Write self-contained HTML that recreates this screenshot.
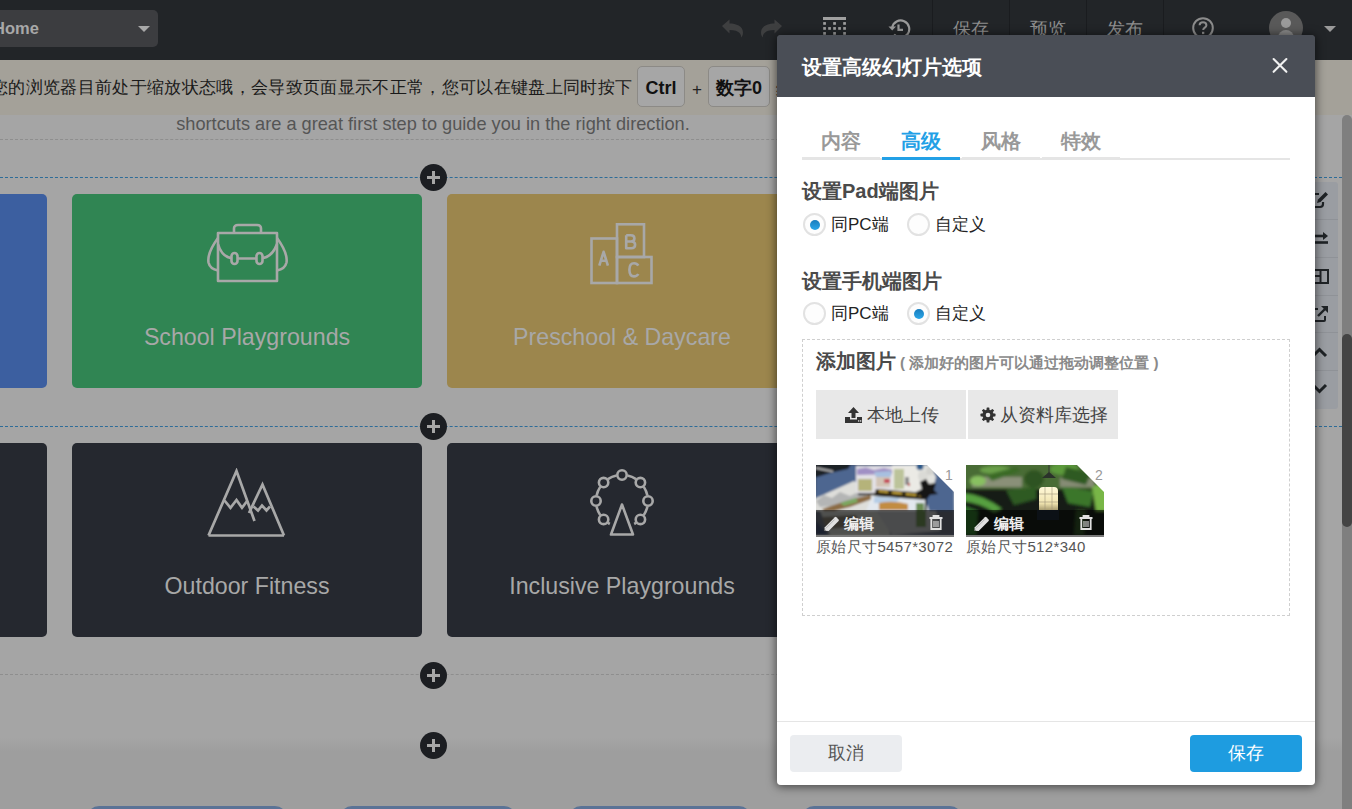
<!DOCTYPE html>
<html><head><meta charset="utf-8">
<style>
*{box-sizing:border-box;margin:0;padding:0}
html,body{width:1352px;height:809px;overflow:hidden}
body{position:relative;background:#a5a5a5;font-family:"Liberation Sans",sans-serif;color:#333}
.abs{position:absolute}
#top{left:0;top:0;width:1352px;height:60px;background:#222528}
#sel{left:-10px;top:10px;width:168px;height:37px;background:#3c3d40;border-radius:5px}
#sel .t{position:absolute;left:3px;top:9px;font-size:16.5px;color:#a8a8a8;font-weight:bold}
#sel .car{position:absolute;left:148px;top:16px;width:0;height:0;border-left:6px solid transparent;border-right:6px solid transparent;border-top:6px solid #a8a8a8}
.tb{top:0;height:60px;width:77px;border-left:1px solid #1a1c1f;color:#8e8e8e;font-size:18px;text-align:center;line-height:58px}
#notice{left:0;top:60px;width:1352px;height:55px;background:#a4a199}
#notice .t{position:absolute;left:-9px;top:18px;font-size:17px;letter-spacing:.33px;color:#1a1a1a;white-space:nowrap;line-height:20px}
.kbd{position:absolute;top:6px;height:41px;border:1px solid #8c8a86;border-radius:5px;background:#a6a6a6;font-weight:bold;font-size:18px;color:#111;text-align:center;line-height:39px;padding-top:2px}
#page{left:0;top:115px;width:1342px;height:695px;overflow:hidden}
#band{left:0;top:738px;width:1342px;height:71px;background:linear-gradient(#a5a5a5 0,#9e9e9e 14px)}
.sub{left:0;width:866px;text-align:center;top:114px;font-size:18.2px;color:#555}
.dash{height:0;border-top:1px dashed #8e8e8e}
.bdash{height:0;border-top:1px dashed #2d6c98}
.card{border-radius:5px}
.card .lbl{position:absolute;left:0;width:100%;text-align:center;font-size:23.2px;color:#a8a8a8}
.plus{width:27px;height:27px;border-radius:50%;background:#1c1e22}
.plus:before{content:"";position:absolute;left:7px;top:12px;width:13px;height:3px;background:#a6a6a6}
.plus:after{content:"";position:absolute;left:12px;top:7px;width:3px;height:13px;background:#a6a6a6}
#scroll{left:1342px;top:115px;width:10px;height:694px;background:#7f7f7f;border-radius:5px 5px 0 0}
#thumb{left:1342px;top:334px;width:10px;height:193px;background:#444;border-radius:5px}
#rtool{left:1290px;top:182px;width:48px;height:227px;background:#9a9da2;border-radius:3px}
.ri{position:absolute;left:0;width:48px;height:1px;background:#8f9297}
#ov-modal{left:777px;top:35px;width:538px;height:750px;background:linear-gradient(#4a4e56 0,#4a4e56 62px,#fff 62px);border-radius:4px;overflow:hidden;box-shadow:0 1px 10px 1px rgba(0,0,0,.55)}
#mhead{left:0;top:0;width:538px;height:62px;background:#4a4e56}
#mhead .t{position:absolute;left:25px;top:21px;font-size:20px;font-weight:bold;color:#fff;line-height:22px}
#close{position:absolute;left:494px;top:21px;width:18px;height:18px}
.tab{position:absolute;top:90px;padding-top:1px;width:78px;height:35px;border-bottom:3px solid #e5e5e5;font-size:20px;font-weight:bold;color:#999;text-align:center;line-height:30px}
.tab.on{color:#22a0e6;border-bottom-color:#22a0e6}
.h{position:absolute;left:25px;font-size:20px;font-weight:bold;color:#4a4a4a;line-height:22px}
.radio{position:absolute;width:23px;height:23px;border-radius:50%;border:2px solid #e2e2e2;background:#fdfdfd}
.radio.on:after{content:"";position:absolute;left:4.5px;top:4.5px;width:10px;height:10px;border-radius:50%;background:linear-gradient(180deg,#1a7dbd,#2aa6e8)}
.rl{position:absolute;font-size:17px;color:#222;line-height:20px}

.btn{position:absolute;width:150px;height:49px;background:#e8e8e8;font-size:18px;color:#444;line-height:22px}
.thumb{position:absolute;width:138px;height:90px}
.thumb .img1,.thumb .img2{position:absolute;left:0;top:0;width:138px;height:70px;overflow:hidden}
.img1{background:linear-gradient(160deg,#2a2f3a 0%,#56657f 25%,#7d8aa0 40%,#c9c9c0 55%,#e6e4dc 70%,#6a7590 100%)}
.img2{background:radial-gradient(ellipse 12px 16px at 74px 38px,#fff6c8 0%,#e5d48a 50%,rgba(0,0,0,0) 100%),linear-gradient(180deg,#2f4a25 0%,#5d8c3a 25%,#8fae6a 35%,#1b2316 50%,#263a1a 80%,#151a12 100%)}
.thumb .bar{position:absolute;left:0;top:45px;width:138px;height:25px;background:rgba(0,0,0,.55)}
.thumb .et{position:absolute;left:28px;top:5px;font-size:15px;color:#eee;font-weight:bold;line-height:17px}
.thumb:after{content:"";position:absolute;left:0;top:70px;width:138px;height:2px;background:#7b7b7b}
.thumb .cut{position:absolute;left:111px;top:0;width:0;height:0;border-top:28px solid #fff;border-left:28px solid transparent}
.thumb .num{position:absolute;left:129px;top:2px;font-size:14px;color:#999;line-height:16px}
.thumb .cap{position:absolute;left:0;top:74px;font-size:15px;letter-spacing:.35px;color:#555;white-space:nowrap;line-height:16px}
</style></head><body>
<!-- top bar -->
<div id="top" class="abs">
  <div id="sel" class="abs"><span class="t">Home</span><span class="car"></span></div>
  <svg class="abs" style="left:722px;top:19px" width="22" height="19" viewBox="0 0 22 19"><path d="M0 7L7.5 0.5V4.5C14 4.5 21 7 21 13.5C21 16 20 17.5 19.2 18.5C19.3 16 18 11 7.5 11V14.5Z" fill="#3e3f40"/></svg>
  <svg class="abs" style="left:760px;top:19px" width="22" height="19" viewBox="0 0 22 19"><g transform="translate(22 0) scale(-1 1)"><path d="M0 7L7.5 0.5V4.5C14 4.5 21 7 21 13.5C21 16 20 17.5 19.2 18.5C19.3 16 18 11 7.5 11V14.5Z" fill="#3e3f40"/></g></svg>
  <svg class="abs" style="left:823px;top:17px" width="24" height="19" viewBox="0 0 24 19"><g fill="#a0a0a0"><rect x="0" y="0" width="23" height="3"/><rect x="0.2" y="5.1" width="2.7" height="2.7"/><rect x="10.2" y="5.1" width="2.7" height="2.7"/><rect x="20.2" y="5.1" width="2.7" height="2.7"/><rect x="0.2" y="10.1" width="2.7" height="2.7"/><rect x="5.2" y="10.1" width="2.7" height="2.7"/><rect x="10.2" y="10.1" width="2.7" height="2.7"/><rect x="15.2" y="10.1" width="2.7" height="2.7"/><rect x="20.2" y="10.1" width="2.7" height="2.7"/><rect x="0.2" y="15.1" width="2.7" height="2.7"/><rect x="10.2" y="15.1" width="2.7" height="2.7"/><rect x="20.2" y="15.1" width="2.7" height="2.7"/></g></svg>
  <svg class="abs" style="left:887px;top:18px" width="24" height="22" viewBox="0 0 24 22"><path d="M5.2 9.5A8.6 8.6 0 1 1 7 16.5" stroke="#9a9a9a" stroke-width="2.2" fill="none"/><path d="M1.5 8.5H9L5.2 12.5Z" fill="#9a9a9a"/><path d="M11.5 6.5V11.8H16" stroke="#9a9a9a" stroke-width="2.2" fill="none"/></svg>
  <div class="abs tb" style="left:932px">保存</div>
  <div class="abs tb" style="left:1009px">预览</div>
  <div class="abs tb" style="left:1086px">发布</div>
  <div class="abs tb" style="left:1163px;width:1px"></div>
  <svg class="abs" style="left:1192px;top:17px" width="22" height="22" viewBox="0 0 22 22"><circle cx="11" cy="11" r="9.8" stroke="#8c8c8c" stroke-width="2" fill="none"/><path d="M7.6 8.3C7.6 6.3 9.2 5.3 11 5.3C13 5.3 14.4 6.5 14.4 8.2C14.4 10.6 11.2 10.6 11.2 13" stroke="#8c8c8c" stroke-width="2" fill="none"/><rect x="10" y="14.8" width="2.3" height="2.3" fill="#8c8c8c"/></svg>
  <div class="abs" style="left:1269px;top:11px;width:34px;height:34px;border-radius:50%;background:#595959;overflow:hidden"><div class="abs" style="left:12px;top:7px;width:10px;height:10px;border-radius:50%;background:#9a9a9a"></div><div class="abs" style="left:9px;top:19px;width:16px;height:14px;border-radius:8px 8px 0 0;background:#8a8a8a"></div></div>
  <div class="abs" style="left:1324px;top:26px;width:0;height:0;border-left:6px solid transparent;border-right:6px solid transparent;border-top:6px solid #9a9a9a"></div>
</div>
<div id="notice" class="abs">
  <div class="t">您的浏览器目前处于缩放状态哦，会导致页面显示不正常，您可以在键盘上同时按下</div>
  <div class="kbd" style="left:637px;width:48px">Ctrl</div>
  <div class="abs" style="left:692px;top:20px;font-size:17px;color:#222">+</div>
  <div class="kbd" style="left:708px;width:62px">数字0</div>
  <div class="abs" style="left:776px;top:18px;font-size:17px;color:#222">组</div>
</div>
<div id="band" class="abs"></div>
<div class="abs" style="left:87px;top:806px;width:200px;height:30px;border-radius:12px;background:#5b7396"></div>
<div class="abs" style="left:340px;top:806px;width:176px;height:30px;border-radius:12px;background:#5b7396"></div>
<div class="abs" style="left:569px;top:806px;width:182px;height:30px;border-radius:12px;background:#5b7396"></div>
<div class="abs" style="left:802px;top:806px;width:160px;height:30px;border-radius:12px;background:#5b7396"></div>

<div class="abs sub">shortcuts are a great first step to guide you in the right direction.</div>
<div class="abs dash" style="left:0;top:139px;width:1300px"></div>
<div class="abs bdash" style="left:0;top:177px;width:1342px"></div>
<div class="abs bdash" style="left:0;top:426px;width:1342px"></div>
<div class="abs dash" style="left:0;top:674px;width:1300px"></div>

<!-- cards row 1 -->
<div class="abs card" style="left:-303px;top:194px;width:350px;height:194px;background:#3c5fa0"></div>
<div class="abs card" style="left:72px;top:194px;width:350px;height:194px;background:#308553">
  <svg class="abs" style="left:134px;top:29px" width="83" height="60" viewBox="-1 -1 83 60"><g stroke="#a8a8a8" stroke-width="2.6" fill="none" stroke-linejoin="round"><path d="M27 8.5V4.5Q27 1 31 1H50Q54 1 54 4.5V8.5"/><rect x="11" y="9" width="59" height="48"/><path d="M11 20Q15 34 27 34.5H53Q65 34 70 20"/><rect x="24.5" y="29" width="6" height="11" rx="3" fill="#308553"/><rect x="49.5" y="29" width="6" height="11" rx="3" fill="#308553"/><path d="M11 14Q0 29 1.5 38.5Q3 45 11 46.5"/><path d="M70 14Q81 29 79.5 38.5Q78 45 70 46.5"/></g></svg><div class="lbl" style="top:130px">School Playgrounds</div>
</div>
<div class="abs card" style="left:447px;top:194px;width:350px;height:194px;background:#9c864d">
  <svg class="abs" style="left:142px;top:28px" width="64" height="64" viewBox="-1 -1 64 64"><g stroke="#a8a8a8" stroke-width="2.6" fill="none"><rect x="1.5" y="15.5" width="25.5" height="44.5"/><rect x="27" y="1.3" width="27" height="32.7"/><rect x="27" y="34" width="34.5" height="26"/></g><g stroke="#a8a8a8" stroke-width="2.6" fill="none" stroke-linejoin="round"><path d="M9.3 42.6L13.6 28.8L17.9 42.6M10.9 37.8H16.3"/><path d="M36.2 12.3V25.2H41.3Q45.1 25.2 45.1 21.7Q45.1 18.5 41.3 18.5H36.2M36.2 12.3H40.8Q44.4 12.3 44.4 15.4Q44.4 18.5 40.8 18.5"/><path d="M48.3 42.6Q47 40.2 44 40.2Q39.4 40.2 39.4 46.8Q39.4 53.4 44 53.4Q47 53.4 48.3 51"/></g></svg><div class="lbl" style="top:130px">Preschool &amp; Daycare</div>
</div>
<!-- cards row 2 -->
<div class="abs card" style="left:-303px;top:443px;width:350px;height:194px;background:#25282f"></div>
<div class="abs card" style="left:72px;top:443px;width:350px;height:194px;background:#25282f">
  <svg class="abs" style="left:134px;top:25px" width="82" height="72" viewBox="-1 -1 82 72"><g stroke="#a8a8a8" stroke-width="2.7" fill="none" stroke-linejoin="miter"><path d="M1.5 66.5L29.5 2L47.5 52"/><path d="M1.5 66.5H77"/><path d="M77 66.5L55.5 15.5L42 44"/><path d="M17.5 31.5L23.5 38.8L29.5 31L35 38.8L40.5 31.5"/><path d="M46.5 37.5L51 41.5L55 36.5L59.5 41.5L63 37.5"/></g></svg><div class="lbl" style="top:130px">Outdoor Fitness</div>
</div>
<div class="abs card" style="left:447px;top:443px;width:350px;height:194px;background:#25282f">
  <svg class="abs" style="left:133px;top:23px" width="84" height="80" viewBox="0 0 84 80"><g stroke="#a8a8a8" stroke-width="2.6" fill="none" stroke-linejoin="round"><path d="M63.8 49.1A26 26 0 0 0 67.4 40.5M67.4 29.5A26 26 0 0 0 63.8 20.9M56.1 13.2A26 26 0 0 0 47.5 9.6M36.5 9.6A26 26 0 0 0 27.9 13.2M20.2 20.9A26 26 0 0 0 16.6 29.5M16.6 40.5A26 26 0 0 0 20.2 49.1M56.1 56.8A26 26 0 0 1 54.2 58.0M27.9 56.8A26 26 0 0 0 29.8 58.0"/><circle cx="42.0" cy="9.0" r="4.7"/><circle cx="60.4" cy="16.6" r="4.7"/><circle cx="23.6" cy="16.6" r="4.7"/><circle cx="68.0" cy="35.0" r="4.7"/><circle cx="16.0" cy="35.0" r="4.7"/><circle cx="60.4" cy="53.4" r="4.7"/><circle cx="23.6" cy="53.4" r="4.7"/><path d="M42 38.5L31 68.5H53Z"/></g></svg><div class="lbl" style="top:130px">Inclusive Playgrounds</div>
</div>

<div class="abs plus" style="left:420px;top:164px"></div>
<div class="abs plus" style="left:420px;top:413px"></div>
<div class="abs plus" style="left:420px;top:662px"></div>
<div class="abs plus" style="left:420px;top:732px"></div>

<div id="rtool" class="abs">
  <div class="ri" style="top:37px"></div><div class="ri" style="top:75px"></div><div class="ri" style="top:113px"></div><div class="ri" style="top:150px"></div><div class="ri" style="top:188px"></div>
  <svg class="abs" style="left:20px;top:8px" width="20" height="20" viewBox="0 0 20 20"><path d="M5 4H9M5 4Q2 4 2 7V14Q2 17 5 17H10Q13 17 13 14V12" stroke="#1f2326" stroke-width="2.2" fill="none"/><path d="M7 13L8 9.5L15.5 2L18 4.5L10.5 12Z" fill="#1f2326"/></svg>
  <svg class="abs" style="left:20px;top:48px" width="20" height="18" viewBox="0 0 20 18"><path d="M2 6H14" stroke="#1f2326" stroke-width="2.6"/><path d="M13 2L18 6L13 10Z" fill="#1f2326"/><path d="M2 12.5H18" stroke="#1f2326" stroke-width="2.6"/></svg>
  <svg class="abs" style="left:20px;top:86px" width="20" height="18" viewBox="0 0 20 18"><path d="M3 2H18V15H3ZM10.5 2V15M3 8H10.5" stroke="#1f2326" stroke-width="2" fill="none"/></svg>
  <svg class="abs" style="left:20px;top:122px" width="20" height="20" viewBox="0 0 20 20"><path d="M8 5H4Q3 5 3 6V16Q3 17 4 17H14Q15 17 15 16V12" stroke="#1f2326" stroke-width="2" fill="none"/><path d="M8 12L16 4" stroke="#1f2326" stroke-width="2.4"/><path d="M11 2H18V9Z" fill="#1f2326"/></svg>
  <svg class="abs" style="left:20px;top:163px" width="20" height="14" viewBox="0 0 20 14"><path d="M3 11L9.5 4.5L16 11" stroke="#1f2326" stroke-width="3" fill="none"/></svg>
  <svg class="abs" style="left:20px;top:200px" width="20" height="14" viewBox="0 0 20 14"><path d="M3 3L9.5 9.5L16 3" stroke="#1f2326" stroke-width="3" fill="none"/></svg>
</div>
<div id="scroll" class="abs"></div>
<div id="thumb" class="abs"></div>

<!-- modal -->
<div id="ov-modal" class="abs">
  <div id="mhead" class="abs"><div class="t">设置高级幻灯片选项</div>
    <svg id="close" viewBox="0 0 18 18"><path d="M2.6 3L15.4 15.8M15.4 3L2.6 15.8" stroke="#f0f0f0" stroke-width="2.1" stroke-linecap="round"/></svg>
  </div>
  <div class="abs" style="left:25px;top:123px;width:488px;height:2px;background:#e5e5e5"></div>
  <div class="tab" style="left:25px">内容</div>
  <div class="tab on" style="left:105px">高级</div>
  <div class="tab" style="left:185px">风格</div>
  <div class="tab" style="left:265px">特效</div>

  <div class="h" style="top:145px">设置Pad端图片</div>
  <div class="radio on" style="left:26px;top:178px"></div><div class="rl" style="left:54px;top:180px">同PC端</div>
  <div class="radio" style="left:130px;top:178px"></div><div class="rl" style="left:158px;top:180px">自定义</div>

  <div class="h" style="top:235px">设置手机端图片</div>
  <div class="radio" style="left:26px;top:267px"></div><div class="rl" style="left:54px;top:269px">同PC端</div>
  <div class="radio on" style="left:130px;top:267px"></div><div class="rl" style="left:158px;top:269px">自定义</div>
  <div class="abs" style="left:25px;top:304px;width:488px;height:277px;border:1px dashed #cfcfcf"></div>
  <div class="h" style="left:39px;top:315px;font-size:20px">添加图片<span style="font-size:15.2px;color:#8a8a8a;margin-left:4px">( 添加好的图片可以通过拖动调整位置 )</span></div>
  <div class="btn" style="left:39px;top:355px"><svg width="17" height="16" viewBox="0 0 17 16" style="position:absolute;left:29px;top:17px"><path d="M8.5 0L14 6H10.5V11H6.5V6H3Z" fill="#333"/><path d="M0 10H5V12.5H12V10H17V16H0Z" fill="#333"/><rect x="13" y="13.3" width="1.3" height="1.3" fill="#e8e8e8"/><rect x="15" y="13.3" width="1.3" height="1.3" fill="#e8e8e8"/></svg><span style="position:absolute;left:51px;top:14px">本地上传</span></div>
  <div class="btn" style="left:191px;top:355px"><svg width="16" height="16" viewBox="0 0 16 16" style="position:absolute;left:12px;top:17px"><g fill="#333"><circle cx="8" cy="8" r="5.6"/><rect x="6.6" y="0.5" width="2.8" height="15" rx=".6"/><rect x="0.5" y="6.6" width="15" height="2.8" rx=".6"/><rect x="6.6" y="0.5" width="2.8" height="15" rx=".6" transform="rotate(45 8 8)"/><rect x="6.6" y="0.5" width="2.8" height="15" rx=".6" transform="rotate(-45 8 8)"/></g><circle cx="8" cy="8" r="2.3" fill="#e8e8e8"/></svg><span style="position:absolute;left:32px;top:14px">从资料库选择</span></div>
  <div class="thumb" style="left:39px;top:430px">
    <div class="img1"><svg width="138" height="70" viewBox="0 0 138 70"><defs><filter id="bl1" x="-5%" y="-5%" width="110%" height="110%"><feGaussianBlur stdDeviation="1.0"/></filter></defs><g filter="url(#bl1)">
<rect width="138" height="70" fill="#4d6690"/>
<path d="M-2 -2H36L32 4L14 8L-2 13Z" fill="#1d2028"/>
<path d="M0 3L17 6.5" stroke="#c8c8c8" stroke-width="1.5"/>
<path d="M-2 34L38 16L62 28L56 46L-2 46Z" fill="#dededa"/>
<path d="M0 36L8 30L16 33L24 27L34 31L44 26L52 32L30 40L4 42Z" fill="#b4b5b5"/>
<path d="M6 44L30 36L54 30L56 34L34 42L10 48Z" fill="#8c6c44"/>
<path d="M24 38L40 33L42 37L28 41Z" fill="#7aa860"/>
<rect x="40" y="1" width="38" height="27" fill="#e3e1e6"/>
<path d="M41 4L50 2.5L58 5L68 3L77 5V9L41 10Z" fill="#a090c4"/>
<path d="M58 7L75 6V12L60 12Z" fill="#a8c0e0"/>
<rect x="42" y="14" width="14" height="12" fill="#b5b37a"/>
<rect x="60" y="12" width="14" height="10" fill="#d2c4b6"/>
<rect x="68" y="14" width="6" height="4" fill="#c44858"/>
<rect x="76" y="0" width="28" height="28" fill="#ebeae5"/>
<rect x="78" y="4" width="10" height="20" fill="#bcc39a"/>
<rect x="89" y="12" width="4" height="8" fill="#8a8a8a"/>
<rect x="92" y="18" width="2" height="3" fill="#c04040"/>
<path d="M102 0H114L120 12L116 28L104 30Z" fill="#e2e2de"/>
<path d="M60 24L110 28L108 35L58 31Z" fill="#2e2812"/>
<path d="M63 26L72 27M76 27.5L86 28.5M90 29L100 30M103 30.5L108 31" stroke="#caa83a" stroke-width="2.2"/>
<rect x="42" y="28" width="20" height="2.2" fill="#1e1e1e"/>
<path d="M56 31L110 35L113 46L50 46Z" fill="#e3e8ee"/>
<path d="M58 32L84 33L80 38L58 38Z" fill="#b6cde6"/>
<path d="M63 38Q77 35 92 39L92 45L63 45Z" fill="#c28c42"/>
<circle cx="107" cy="11" r="5" fill="#dadad6"/><circle cx="114" cy="6" r="4" fill="#d2d2ce"/>
<circle cx="104" cy="1.5" r="3.5" fill="#2a5a8a"/>
<path d="M104 17L110 14L113 19L120 18L118 25L122 29L114 30L111 34L111 50L109 50L109 34L104 31L100 27L106 24Z" fill="#161616"/>
<path d="M100 38L108 38L109 60L100 60Z" fill="#6a8c52"/>
<path d="M-2 46H138V70H-2Z" fill="#5d6370"/>
<path d="M4 46L72 46L74 70H14Z" fill="#b0b2ae"/>
<path d="M6 52L40 50L44 62L10 64Z" fill="#767064"/>
<path d="M60 46L120 46L124 66L76 70Z" fill="#a4a6a8"/>
<path d="M0 56L12 70H0Z" fill="#3c4a66"/>
<path d="M100 46L110 46L110 62L100 62Z" fill="#5e7e48"/>
</g></svg></div>
    <div class="bar"><svg width="17" height="16" viewBox="0 0 17 16" style="position:absolute;left:7px;top:6px"><path d="M1.2 14.8L1.8 11.2L11.8 1.2Q12.6 0.5 13.4 1.2L15.6 3.4Q16.3 4.2 15.6 5L5.6 15Z" fill="#e0e0e0"/><path d="M2.6 12.6L11.6 3.6" stroke="#999" stroke-width=".6"/><path d="M1.2 14.8L1.5 13L3 14.5Z" fill="#444"/></svg><span class="et">编辑</span><svg width="14" height="15" viewBox="0 0 14 15" style="position:absolute;left:113px;top:5px"><path d="M0.5 3H13.5M4.5 3V1H9.5V3M2.3 4V14H11.7V4" stroke="#e0e0e0" stroke-width="1.8" fill="none"/><path d="M5 6V12M7 6V12M9 6V12" stroke="#e0e0e0" stroke-width="1.1"/></svg></div>
    <div class="cut"></div><div class="num">1</div>
    <div class="cap">原始尺寸5457*3072</div>
  </div>
  <div class="thumb" style="left:189px;top:430px">
    <div class="img2"><svg width="138" height="70" viewBox="0 0 138 70"><defs><filter id="bl2" x="-5%" y="-5%" width="110%" height="110%"><feGaussianBlur stdDeviation="1.5"/></filter><filter id="bl3" x="-20%" y="-20%" width="140%" height="140%"><feGaussianBlur stdDeviation="0.45"/></filter></defs>
<g filter="url(#bl2)">
<rect x="-3" y="-3" width="144" height="76" fill="#35502a"/>
<rect x="-3" y="-3" width="144" height="28" fill="#4a6c34"/>
<rect x="6" y="12" width="50" height="10" fill="#8a9078"/>
<rect x="94" y="13" width="34" height="9" fill="#868c74"/>
<ellipse cx="30" cy="5" rx="16" ry="4" fill="#6aa048"/><path d="M20 10L50 2L55 6L26 16Z" fill="#3a6a28"/>
<ellipse cx="12" cy="16" rx="8" ry="5" fill="#88c060"/>
<ellipse cx="98" cy="4" rx="14" ry="6" fill="#5c9a3a"/>
<ellipse cx="68" cy="14" rx="10" ry="9" fill="#2e5222"/><path d="M100 2L125 8L120 20L96 14Z" fill="#2e5a22"/>
<rect x="-3" y="24" width="144" height="49" fill="#171a15"/>
<path d="M-3 28Q18 30 36 44L28 47Q14 38 -3 36Z" fill="#56a040"/>
<path d="M-3 40L12 46L10 70H-3Z" fill="#2c6a28"/>
<path d="M40 25L70 22L70 34L48 40Z" fill="#2e5a24"/>
<path d="M96 22L128 26L124 42L102 38Z" fill="#3a762a"/>
<path d="M126 22L141 16V46L130 46Z" fill="#78b646"/>
<path d="M110 45L120 45L118 70H108Z" fill="#2a4a22"/>
</g>
<g filter="url(#bl3)">
<path d="M76 13L83 7L90 13Z" fill="#2a302a"/>
<rect x="82.5" y="0" width="1" height="8" fill="#333"/>
<defs><linearGradient id="lg" x1="0" y1="0" x2="0" y2="1"><stop offset="0" stop-color="#fff8d8"/><stop offset=".7" stop-color="#f0e4b0"/><stop offset="1" stop-color="#a89c70"/></linearGradient></defs><path d="M73 26Q73 22 77 22H88Q92 22 92 26V45H73Z" fill="url(#lg)"/>
<path d="M79 22V45M86 22V45M73 29H92M73 37H92" stroke="#a09478" stroke-width=".6"/>
<rect x="71" y="45" width="22" height="10" fill="#1e2630"/>
</g></svg></div>
    <div class="bar"><svg width="17" height="16" viewBox="0 0 17 16" style="position:absolute;left:7px;top:6px"><path d="M1.2 14.8L1.8 11.2L11.8 1.2Q12.6 0.5 13.4 1.2L15.6 3.4Q16.3 4.2 15.6 5L5.6 15Z" fill="#e0e0e0"/><path d="M2.6 12.6L11.6 3.6" stroke="#999" stroke-width=".6"/><path d="M1.2 14.8L1.5 13L3 14.5Z" fill="#444"/></svg><span class="et">编辑</span><svg width="14" height="15" viewBox="0 0 14 15" style="position:absolute;left:113px;top:5px"><path d="M0.5 3H13.5M4.5 3V1H9.5V3M2.3 4V14H11.7V4" stroke="#e0e0e0" stroke-width="1.8" fill="none"/><path d="M5 6V12M7 6V12M9 6V12" stroke="#e0e0e0" stroke-width="1.1"/></svg></div>
    <div class="cut"></div><div class="num">2</div>
    <div class="cap">原始尺寸512*340</div>
  </div>
  <div class="abs" style="left:0;top:686px;width:538px;height:1px;background:#e5e5e5"></div>
  <div class="abs" style="left:13px;top:700px;width:112px;height:37px;background:#ebedf0;border-radius:4px;text-align:center;font-size:18px;line-height:37px;color:#555">取消</div>
  <div class="abs" style="left:413px;top:700px;width:112px;height:37px;background:#1e9ce0;border-radius:4px;text-align:center;font-size:18px;line-height:37px;color:#fff">保存</div>
</div>

</body></html>
